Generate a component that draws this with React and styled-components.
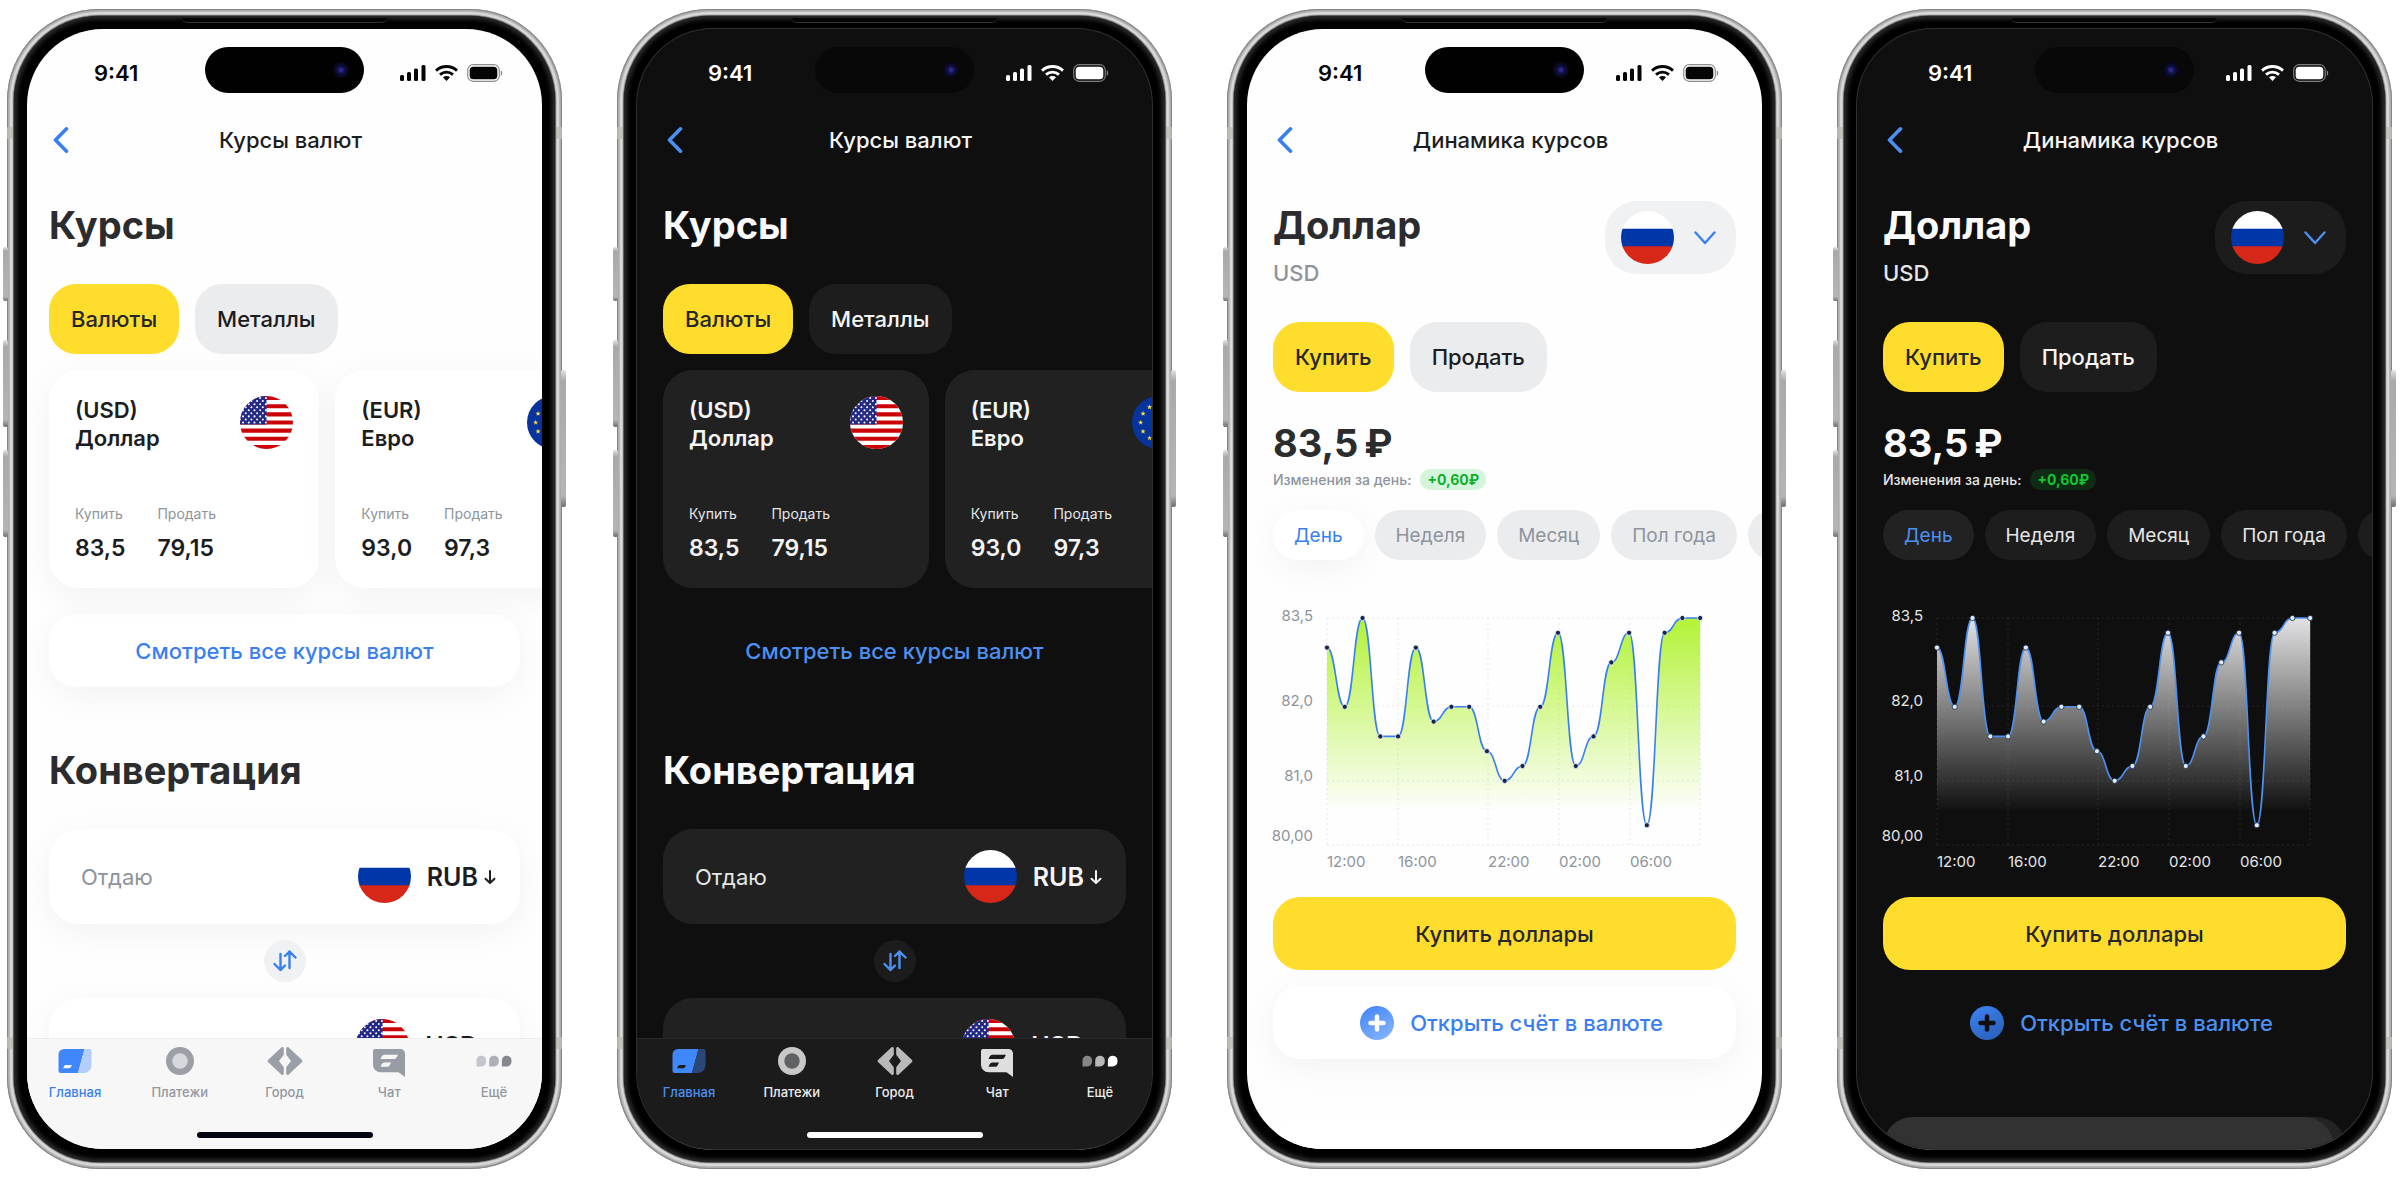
import React, { useId } from 'react';
import styled, { createGlobalStyle, ThemeProvider } from 'styled-components';

const light = {
    dark: false,
    screen: '#fefefe',
    heading: '#2b2c2e',
    text: '#1c1d1f',
    muted: '#8d949c',
    blue: '#3a7ff2',
    pill: '#ebecee',
    soft: '#f0f1f2',
    card: '#ffffff',
    ghost: '#ffffff',
    shadow: '0 8px 36px rgba(0, 0, 0, 0.05)',
    chipActive: '#ffffff',
    sheet: '#ffffff',
    sheetBack: '#ffffff',
    tabs: '#f7f7f8',
    tabsLine: '#ececed',
    tabsText: '#9298a0',
    home: '#02040f',
    edge: 'transparent',
    edgeBottom: 'transparent',
    island: '#010101',
    statusText: '#050505',
    badge: '#d5f4dc',
    badgeText: '#0cb02c',
    grid: '#e6e7e9',
    chart: '#aef22a',
    dot: '#14264f',
    halo: '#ffffff',
    icon: '#9a9ea6',
    iconSoft: '#d5d8dd',
    iconStrong: '#989ca5',
    cut: '#f7f7f8',
    homeSoft: '#b5cdfb',
    plusEnd: '#7fb0ff'
};

const dark = {
    dark: true,
    screen: '#0f0f0f',
    heading: '#fafafa',
    text: '#f5f5f5',
    muted: '#e6e6e6',
    blue: '#4c90f2',
    pill: '#1d1d1d',
    soft: '#1c1c1c',
    card: '#212121',
    ghost: 'transparent',
    shadow: 'none',
    chipActive: '#222222',
    sheet: '#323232',
    sheetBack: '#232323',
    tabs: '#1b1b1b',
    tabsLine: '#2a2a2a',
    tabsText: '#ececec',
    home: '#ffffff',
    edge: '#303030',
    edgeBottom: '#a8a8a8',
    island: '#080808',
    statusText: '#ffffff',
    badge: '#0f2a15',
    badgeText: '#10c92f',
    grid: '#262626',
    chart: '#f0f0f2',
    dot: '#dcebff',
    halo: '#142036',
    icon: '#b9b9b9',
    iconSoft: '#606162',
    iconStrong: '#dedede',
    cut: '#1b1b1b',
    homeSoft: '#2a4778',
    plusEnd: '#2b63bd'
};

const TABS = [
    { id: 'home', label: 'Главная' },
    { id: 'pay', label: 'Платежи' },
    { id: 'city', label: 'Город' },
    { id: 'chat', label: 'Чат' },
    { id: 'more', label: 'Ещё' }
];

const RATES = [
    { code: 'USD', name: 'Доллар', buy: '83,5', sell: '79,15' },
    { code: 'EUR', name: 'Евро', buy: '93,0', sell: '97,3' }
];

const PERIODS = ['День', 'Неделя', 'Месяц', 'Пол года'];

// steps down from the top line of the chart
const POINTS = [2, 6, 0, 8, 8, 2, 7, 6, 6, 9, 11, 10, 6, 1, 10, 8, 3, 1, 14, 1, 0, 0];

const Y_LABELS = [
    { text: '83,5', y: 6 },
    { text: '82,0', y: 91 },
    { text: '81,0', y: 166 },
    { text: '80,00', y: 226 }
];

const X_LABELS = [
    { text: '12:00', x: 54 },
    { text: '16:00', x: 125 },
    { text: '22:00', x: 215 },
    { text: '02:00', x: 286 },
    { text: '06:00', x: 357 }
];

const App = () => {
    return (
        <>
            <GlobalStyle />
            <Stage>
                <Phone theme={light} pad={22}><RatesPage /></Phone>
                <Phone theme={dark} pad={26}><RatesPage /></Phone>
                <Phone theme={light} pad={26}><DynamicsPage /></Phone>
                <Phone theme={dark} pad={26}><DynamicsPage /></Phone>
            </Stage>
        </>
    );
};

const Phone = ({ theme, pad, children }) => (
    <ThemeProvider theme={{ ...theme, pad }}>
        <Frame>
            <SideKey $side="left" $top="20.5%" $height="4.7%" />
            <SideKey $side="left" $top="28.5%" $height="7.5%" />
            <SideKey $side="left" $top="38%" $height="7.5%" />
            <SideKey $side="right" $top="31.1%" $height="11.8%" />
            <Band $top="10.2%" />
            <Band $top="88.6%" />
            <Bezel>
                <Earpiece />
                <Screen>
                    <StatusBar />
                    {children}
                </Screen>
            </Bezel>
        </Frame>
    </ThemeProvider>
);

const StatusBar = () => (
    <Status>
        <Time>9:41</Time>
        <Island><Lens /></Island>
        <StatusIcons>
            <svg width="26" height="16" viewBox="0 0 26 16" fill="currentColor">
                <rect x="0" y="10" width="4" height="6" rx="1.5" />
                <rect x="7" y="7" width="4" height="9" rx="1.5" />
                <rect x="14" y="3.5" width="4" height="12.5" rx="1.5" />
                <rect x="21.5" y="0" width="4" height="16" rx="1.5" />
            </svg>
            <svg width="23" height="16" viewBox="0 0 23 16" fill="none" stroke="currentColor" strokeWidth="2.8">
                <path d="M1 5.6C7 .1 16 .1 22 5.6" />
                <path d="M5 9.600c3.800-3.400 9.200-3.400 13 0" />
                <path d="M11.500 16 8 12.300c2-1.800 5-1.800 7 0z" fill="currentColor" stroke="none" />
            </svg>
            <svg width="36" height="18" viewBox="0 0 36 18">
                <rect x=".7" y=".7" width="31.6" height="16.6" rx="5.5" fill="none" stroke="currentColor" strokeWidth="1.2" opacity=".45" />
                <rect x="2.7" y="2.7" width="27.6" height="12.6" rx="3.6" fill="currentColor" />
                <path d="M33.800 6.200c1.800.8 1.800 4.800 0 5.600z" fill="currentColor" opacity=".5" />
            </svg>
        </StatusIcons>
    </Status>
);

const NavBar = ({ title }) => (
    <Nav>
        <IconButton aria-label="Назад">
            <svg width="16" height="28" viewBox="0 0 16 28" fill="none" stroke="currentColor" strokeWidth="3.6" strokeLinecap="round" strokeLinejoin="round">
                <path d="M13.500 2.800 2.500 14l11 11.200" />
            </svg>
        </IconButton>
        <NavTitle>{title}</NavTitle>
    </Nav>
);

const RatesPage = () => (
    <>
        <NavBar title="Курсы валют" />
        <Content>
            <Heading>Курсы</Heading>
            <Pills>
                <Pill $active>Валюты</Pill>
                <Pill>Металлы</Pill>
            </Pills>
            <Cards>
                {RATES.map((rate) => (
                    <Card key={rate.code}>
                        <CardTop>
                            <CardName>({rate.code})<br />{rate.name}</CardName>
                            <Flag code={rate.code} />
                        </CardTop>
                        <Prices>
                            <div>
                                <dt>Купить</dt>
                                <dd>{rate.buy}</dd>
                            </div>
                            <div>
                                <dt>Продать</dt>
                                <dd>{rate.sell}</dd>
                            </div>
                        </Prices>
                    </Card>
                ))}
            </Cards>
            <WideButton $top={26}>Смотреть все курсы валют</WideButton>
            <Heading $top={59}>Конвертация</Heading>
            <Converter>
                <Exchange label="Отдаю" code="RUB" />
                <Swap aria-label="Поменять местами">
                    <svg width="24" height="24" viewBox="0 0 24 24" fill="none" stroke="currentColor" strokeWidth="2.4" strokeLinecap="round" strokeLinejoin="round">
                        <path d="M7.500 5v16M1.500 15 7.500 21l4.500-4.500M16.500 19V2.500M12 7 16.500 2.500 22.500 8.500" />
                    </svg>
                </Swap>
                <Exchange label="Получаю" code="USD" />
            </Converter>
        </Content>
        <TabBar>
            <TabList>
                {TABS.map((tab) => (
                    <Tab key={tab.id} href="#" $active={tab.id === 'home'}>
                        <TabIcon id={tab.id} />
                        {tab.label}
                    </Tab>
                ))}
            </TabList>
            <HomeBar />
        </TabBar>
    </>
);

const Exchange = ({ label, code }) => (
    <Field>
        <Amount aria-label={label} placeholder={label} />
        <Flag code={code} />
        <CurrencyLabel>
            <Currency aria-label="Валюта" defaultValue={code}>
                <option>{code}</option>
            </Currency>
            <svg width="12" height="16" viewBox="0 0 12 16" fill="none" stroke="currentColor" strokeWidth="2" strokeLinecap="round" strokeLinejoin="round">
                <path d="M6 2v12M1.500 9.800 6 14l4.500-4.200" />
            </svg>
        </CurrencyLabel>
    </Field>
);

const DynamicsPage = () => (
    <>
        <NavBar title="Динамика курсов" />
        <Content>
            <TitleRow>
                <div>
                    <Heading>Доллар</Heading>
                    <Code>USD</Code>
                </div>
                <FlagButton aria-haspopup="listbox" aria-label="Валюта счёта">
                    <Flag code="RUB" />
                    <svg width="22" height="14" viewBox="0 0 22 14" fill="none" stroke="currentColor" strokeWidth="2.4" strokeLinecap="round" strokeLinejoin="round">
                        <path d="M1.500 1.500 11 12l9.500-10.500" />
                    </svg>
                </FlagButton>
            </TitleRow>
            <Pills>
                <Pill $active>Купить</Pill>
                <Pill>Продать</Pill>
            </Pills>
            <Price as="p" $top={27}>
                <span>83,5</span>
                <span>₽</span>
            </Price>
            <Change>
                Изменения за день:
                <Badge>+0,60₽</Badge>
            </Change>
            <Chips>
                {PERIODS.map((period, i) => (
                    <Chip key={period} $active={i === 0}>{period}</Chip>
                ))}
                <Chip aria-label="Год" />
            </Chips>
            <Chart />
            <BuyButton>Купить доллары</BuyButton>
            <WideButton $top={16}>
                <PlusIcon />
                Открыть счёт в валюте
            </WideButton>
            <SheetBack><Sheet /></SheetBack>
        </Content>
    </>
);

const Chart = () => {
    const id = useId();
    const coords = POINTS.map((p, i) => [54 + i * 17.77, 8 + p * 14.8]);
    const line = coords.reduce((path, [x, y], i) => {
        if (i === 0) return `M${x} ${y}`;
        const [px, py] = coords[i - 1];
        const mid = (px + x) / 2;
        return `${path}C${mid} ${py} ${mid} ${y} ${x} ${y}`;
    }, '');

    return (
        <ChartSvg viewBox="0 0 463 260" role="img" aria-label="График курса доллара">
            <defs>
                <linearGradient id={id} gradientUnits="userSpaceOnUse" x1="0" y1="8" x2="0" y2="202">
                    <stop className="fill" offset="0" stopOpacity=".94" />
                    <stop className="fill" offset="1" stopOpacity="0" />
                </linearGradient>
            </defs>
            <g className="grid">
                {[8, 96, 171, 235].map((y) => <path key={y} d={`M54 ${y}H427`} />)}
                {[54, 125, 215, 286, 357, 427].map((x) => <path key={x} d={`M${x} 8V235`} />)}
            </g>
            <path d={`${line}V235H54Z`} fill={`url(#${id})`} />
            <path className="line" d={line} />
            {coords.map(([x, y]) => <circle key={x} cx={x} cy={y} r="2.6" />)}
            {Y_LABELS.map((l) => <text key={l.text} x="40" y={l.y + 5} textAnchor="end">{l.text}</text>)}
            {X_LABELS.map((l) => <text key={l.text} x={l.x} y="257">{l.text}</text>)}
        </ChartSvg>
    );
};

const Flag = ({ code }) => {
    const id = useId();
    return (
        <FlagSvg viewBox="0 0 52 52" aria-hidden="true">
            <clipPath id={id}><circle cx="26" cy="26" r="26" /></clipPath>
            <g clipPath={`url(#${id})`}>
                {code === 'RUB' && (
                    <>
                        <path fill="#fff" d="M0 0h52v18H0z" />
                        <path fill="#0036a7" d="M0 17.300h52v18H0z" />
                        <path fill="#d62718" d="M0 34.700h52V52H0z" />
                    </>
                )}
                {code === 'USD' && (
                    <>
                        <path fill="#fff" d="M0 0h52v52H0z" />
                        {[0, 8, 16, 24, 32, 40, 48].map((y) => <path key={y} fill="#cc0407" d={`M0 ${y}h52v4H0z`} />)}
                        <path fill="#232a86" d="M0 0h26v28H0z" />
                        {[...Array(9)].map((_, row) => [...Array(5)].map((_, col) => (
                            <circle key={`${row}-${col}`} fill="#fff" r="1" cx={(row % 2 ? 0 : 3) + col * 5.6} cy={2 + row * 3} />
                        )))}
                    </>
                )}
                {code === 'EUR' && (
                    <>
                        <path fill="#07339c" d="M0 0h52v52H0z" />
                        {[...Array(12)].map((_, i) => (
                            <g key={i} transform={`translate(${26 + 17.5 * Math.cos(i * Math.PI / 6)} ${26 + 17.5 * Math.sin(i * Math.PI / 6)})`}>
                                <path fill="#ffe14a" d="M0-2.600.6-.8h1.900L1 .4l.6 1.800L0 1.100l-1.600 1.100.6-1.800L-2.500-.8h1.900z" />
                            </g>
                        ))}
                    </>
                )}
            </g>
        </FlagSvg>
    );
};

const TabIcon = ({ id }) => (
    <TabSvg viewBox="0 0 36 32" aria-hidden="true">
        {id === 'home' && (
            <>
                <path className="main" d="M7 4h20.500L21 28H4a2.500 2.500 0 0 1-2.500-2.500V9.500A5.500 5.500 0 0 1 7 4z" />
                <path className="soft" d="M27.500 4h5A2 2 0 0 1 34.500 6v14.500a7.500 7.500 0 0 1-7.500 7.500h-6z" />
                <path className="cut" d="M8.500 20h6.500l-1.200 2.200a2 2 0 0 1-1.800 1H6.300l.7-2a2 2 0 0 1 1.500-1.200z" />
            </>
        )}
        {id === 'pay' && (
            <>
                <circle className="ring" cx="18" cy="16" r="14" />
                <circle className="inner" cx="18" cy="16" r="7.7" />
            </>
        )}
        {id === 'city' && (
            <>
                <path className="gray" d="M16.800 3.500V9.800L12 16l4.800 6.200v6.300c0 1.400-1.500 2-2.500 1L1.200 17.300a1.900 1.900 0 0 1 0-2.600L14.300 2.500c1-1 2.500-.4 2.500 1z" />
                <path className="gray" d="M19.200 3.500V9.800L24 16l-4.800 6.200v6.300c0 1.400 1.500 2 2.500 1l13.100-12.200a1.900 1.900 0 0 0 0-2.600L21.700 2.500c-1-1-2.500-.4-2.500 1z" />
            </>
        )}
        {id === 'chat' && (
            <>
                <path className="strong" d="M4 4h25.500A4.500 4.500 0 0 1 34 8.500V32l-6.500-4.700H9.500A7.500 7.500 0 0 1 2 19.800V6a2 2 0 0 1 2-2z" />
                <path className="cut" d="M13.500 9.800H27l-1.500 2.700a3 3 0 0 1-2.600 1.500H9.500l1.200-2.600a3 3 0 0 1 2.800-1.600zM13.300 17.600H20l-1.300 2.600a3 3 0 0 1-2.600 1.600H9.500l1.200-2.600a3 3 0 0 1 2.600-1.600z" />
            </>
        )}
        {id === 'more' && (
            <>
                <path className="strong" opacity=".55" d="M.5 21.500v-6a4.800 4.800 0 0 1 9.600 0v1.300a4.700 4.700 0 0 1-4.700 4.700z" />
                <path className="strong" opacity=".8" d="M13.200 21.500v-6a4.800 4.800 0 0 1 9.600 0v1.300a4.700 4.700 0 0 1-4.700 4.700z" />
                <path className="last" d="M25.900 21.500v-6a4.800 4.800 0 0 1 9.600 0v1.300a4.700 4.700 0 0 1-4.700 4.700z" />
            </>
        )}
    </TabSvg>
);

const PlusIcon = () => {
    const id = useId();
    return (
        <PlusSvg width="34" height="34" viewBox="0 0 34 34" aria-hidden="true">
            <linearGradient id={id} x1="0" y1="0" x2=".6" y2="1">
                <stop className="start" offset="0" />
                <stop className="end" offset="1" />
            </linearGradient>
            <circle cx="17" cy="17" r="17" fill={`url(#${id})`} />
            <path d="M17 10.500v13M10.500 17h13" />
        </PlusSvg>
    );
};

const GlobalStyle = createGlobalStyle`
    *{
        box-sizing: border-box;
        margin: 0;
        padding: 0;
    }
    body{
        background: #fff;
        font-family: Inter, "Liberation Sans", sans-serif;
        -webkit-font-smoothing: antialiased;
    }
    button, input, select{
        font: inherit;
        color: inherit;
        border: 0;
        background: none;
    }
    svg{
        flex: none;
        display: block;
    }
`;

const Stage = styled.main`
    display: flex;
    gap: 55px;
    padding: 9px 8px 11px 7px;
    overflow: hidden;
`;

const Frame = styled.section`
    position: relative;
    flex: 1;
    min-width: 0;
    aspect-ratio: 555 / 1160;
    padding: 7px;
    border-radius: 92px;
    background: #c2c2c1;
    box-shadow: inset 0 0 0 1px #858584, inset 0 0 2px 3px #a9a9a8, inset 0 0 2px 5px #e9e9e9;
`;

const SideKey = styled.span`
    position: absolute;
    ${({ $side }) => $side}: -4px;
    top: ${({ $top }) => $top};
    height: ${({ $height }) => $height};
    width: 5px;
    border-radius: 2px;
    background: linear-gradient(#e2e2e2, #a9a9a9 8%, #b5b5b5 92%, #6e6e6e);
`;

const Band = styled.span`
    position: absolute;
    left: 0;
    right: 0;
    top: ${({ $top }) => $top};
    height: 12px;
    background: rgba(190, 189, 180, 0.8);
`;

const Bezel = styled.div`
    position: relative;
    height: 100%;
    padding: 13px;
    border-radius: 85px;
    background: #000;
    box-shadow: 0 0 1px 1px #555, inset 0 0 4px 3px #2c2c2c;
`;

const Earpiece = styled.span`
    position: absolute;
    top: 2px;
    left: 31%;
    right: 31%;
    height: 5px;
    border-radius: 0 0 6px 6px;
    background: #050505;
    border-bottom: 1px solid #333;
`;

const Screen = styled.div`
    position: relative;
    display: flex;
    flex-direction: column;
    height: 100%;
    overflow: hidden;
    border-radius: 76px;
    background: ${({ theme }) => theme.screen};
    color: ${({ theme }) => theme.text};
    box-shadow: 0 0 0 1px ${({ theme }) => theme.edge}, 0 1px 0 ${({ theme }) => theme.edgeBottom};
    font-size: 22px;
    font-weight: 500;
`;

const Status = styled.header`
    display: grid;
    grid-template-columns: 1fr 159px 1fr;
    flex: none;
    height: 84px;
    padding-top: 18px;
    line-height: 52px;
    color: ${({ theme }) => theme.statusText};
`;

const Time = styled.span`
    padding-left: ${({ theme }) => theme.pad + 45}px;
    font-weight: 600;
`;

const Island = styled.span`
    display: flex;
    align-items: center;
    justify-content: flex-end;
    height: 46px;
    padding-right: 15px;
    border-radius: 23px;
    background: ${({ theme }) => theme.island};
`;

const Lens = styled.span`
    width: 16px;
    height: 16px;
    border-radius: 50%;
    background: radial-gradient(#2c2a86 0 12%, #11104a 30%, #08081c 60%, #030308);
`;

const StatusIcons = styled.span`
    display: flex;
    align-items: center;
    justify-content: flex-end;
    gap: 9px;
    height: 52px;
    padding-right: ${({ theme }) => theme.pad + 17}px;
`;

const Nav = styled.nav`
    display: grid;
    grid-template-columns: 36px 1fr 24px;
    align-items: center;
    flex: none;
    height: 54px;
    padding: 0 ${({ theme }) => theme.pad}px;
`;

const IconButton = styled.button`
    padding-left: 4px;
    color: ${({ theme }) => theme.blue};
`;

const NavTitle = styled.span`
    text-align: center;
`;

const Content = styled.div`
    flex: 1;
    min-height: 0;
    overflow: hidden;
    padding: 34px ${({ theme }) => theme.pad}px 0;
`;

const Heading = styled.h2`
    margin-top: ${({ $top }) => $top || 0}px;
    font-size: 38px;
    line-height: 48px;
    font-weight: 700;
    color: ${({ theme }) => theme.heading};
`;

const Price = styled(Heading)`
    display: flex;
    gap: 6px;
`;

const Pills = styled.div`
    display: flex;
    gap: 16px;
    margin-top: 35px;
`;

const Pill = styled.button`
    height: 70px;
    padding: 0 22px;
    border-radius: 27px;
    background: ${({ $active, theme }) => ($active ? '#ffdd2d' : theme.pill)};
    color: ${({ $active, theme }) => ($active ? '#26272b' : theme.text)};
`;

const Cards = styled.div`
    display: flex;
    gap: 16px;
    margin-top: 16px;
`;

const Card = styled.article`
    display: flex;
    flex-direction: column;
    justify-content: space-between;
    flex: 0 0 57.4%;
    height: 218px;
    padding: 26px;
    border-radius: 30px;
    background: ${({ theme }) => theme.card};
    box-shadow: ${({ theme }) => theme.shadow};
`;

const CardTop = styled.div`
    display: flex;
    justify-content: space-between;
`;

const CardName = styled.h3`
    font-size: 22px;
    line-height: 28px;
    font-weight: 600;
`;

const Prices = styled.dl`
    display: flex;
    gap: 32px;
    dt{
        font-size: 14px;
        line-height: 20px;
        font-weight: 400;
        color: ${({ theme }) => theme.muted};
    }
    dd{
        margin-top: 10px;
        font-size: 23px;
        line-height: 28px;
        font-weight: 600;
    }
`;

const WideButton = styled.button`
    display: flex;
    align-items: center;
    justify-content: center;
    gap: 16px;
    width: 100%;
    height: 73px;
    margin-top: ${({ $top }) => $top}px;
    border-radius: 27px;
    background: ${({ theme }) => theme.ghost};
    box-shadow: ${({ theme }) => theme.shadow};
    color: ${({ theme }) => theme.blue};
`;

const BuyButton = styled(WideButton)`
    margin-top: 27px;
    background: #ffdd2d;
    box-shadow: none;
    color: #26272b;
`;

const Converter = styled.form`
    display: flex;
    flex-direction: column;
    align-items: center;
    gap: 16px;
    margin-top: 35px;
`;

const Field = styled.div`
    display: flex;
    align-items: center;
    width: 100%;
    height: 95px;
    padding: 0 24px 0 32px;
    border-radius: 30px;
    background: ${({ theme }) => theme.card};
    box-shadow: ${({ theme }) => theme.shadow};
`;

const Amount = styled.input`
    flex: 1;
    min-width: 0;
    font-weight: 400;
    outline: 0;
    &::placeholder{
        color: ${({ theme }) => theme.muted};
        opacity: 1;
    }
`;

const CurrencyLabel = styled.label`
    display: flex;
    align-items: center;
    gap: 6px;
    margin-left: 16px;
`;

const Currency = styled.select`
    appearance: none;
    field-sizing: content;
    font-size: 25px;
    font-weight: 600;
    outline: 0;
`;

const Swap = styled.button`
    display: grid;
    place-items: center;
    width: 42px;
    height: 42px;
    border-radius: 50%;
    background: ${({ theme }) => theme.soft};
    color: ${({ theme }) => theme.blue};
`;

const TabBar = styled.footer`
    position: relative;
    display: flex;
    flex-direction: column;
    justify-content: space-between;
    flex: none;
    height: 111px;
    padding: 6px ${({ theme }) => theme.pad - 4}px 11px;
    border-top: 1px solid ${({ theme }) => theme.tabsLine};
    background: ${({ theme }) => theme.tabs};
`;

const TabList = styled.nav`
    display: flex;
    justify-content: space-between;
`;

const Tab = styled.a`
    display: flex;
    flex-direction: column;
    align-items: center;
    gap: 6px;
    width: 60px;
    font-size: 13px;
    line-height: 18px;
    text-decoration: none;
    color: ${({ $active, theme }) => ($active ? theme.blue : theme.tabsText)};
`;

const TabSvg = styled.svg`
    width: 36px;
    height: 32px;
    .main{ fill: #3f87fb; }
    .soft{ fill: ${({ theme }) => theme.homeSoft}; }
    .cut{ fill: ${({ theme }) => theme.cut}; }
    .ring{ fill: ${({ theme }) => (theme.dark ? '#c8c8c8' : '#9ca0a6')}; }
    .inner{ fill: ${({ theme }) => theme.iconSoft}; }
    .gray{ fill: ${({ theme }) => theme.icon}; }
    .strong{ fill: ${({ theme }) => theme.iconStrong}; }
    .last{ fill: ${({ theme }) => (theme.dark ? '#ffffff' : '#85888f')}; }
`;

const HomeBar = styled.span`
    align-self: center;
    width: 176px;
    height: 6px;
    border-radius: 3px;
    background: ${({ theme }) => theme.home};
`;

const TitleRow = styled.div`
    display: flex;
    justify-content: space-between;
    align-items: flex-start;
    height: 86px;
`;

const Code = styled.p`
    margin-top: 10px;
    line-height: 28px;
    color: ${({ theme }) => theme.muted};
`;

const FlagButton = styled.button`
    display: flex;
    align-items: center;
    gap: 20px;
    height: 73px;
    padding: 0 20px 0 16px;
    border-radius: 32px;
    background: ${({ theme }) => theme.soft};
    color: ${({ theme }) => theme.blue};
`;

const FlagSvg = styled.svg`
    width: 53px;
    height: 53px;
`;

const Change = styled.p`
    display: flex;
    align-items: center;
    gap: 9px;
    height: 24px;
    font-size: 14px;
    color: ${({ theme }) => theme.muted};
`;

const Badge = styled.span`
    padding: 0 7px;
    border-radius: 10px;
    line-height: 21px;
    font-weight: 700;
    background: ${({ theme }) => theme.badge};
    color: ${({ theme }) => theme.badgeText};
`;

const Chips = styled.div`
    display: flex;
    gap: 11px;
    margin-top: 19px;
`;

const Chip = styled.button`
    flex: none;
    min-width: 80px;
    height: 50px;
    padding: 0 21px;
    border-radius: 25px;
    font-size: 19px;
    font-weight: 400;
    background: ${({ $active, theme }) => ($active ? theme.chipActive : theme.pill)};
    box-shadow: ${({ $active, theme }) => ($active ? theme.shadow : 'none')};
    color: ${({ $active, theme }) => ($active ? theme.blue : theme.muted)};
`;

const ChartSvg = styled.svg`
    width: 100%;
    margin-top: 50px;
    overflow: visible;
    font-size: 15px;
    font-weight: 400;
    .fill{ stop-color: ${({ theme }) => theme.chart}; }
    .grid{
        stroke: ${({ theme }) => theme.grid};
        stroke-dasharray: 2 3;
    }
    .line{
        fill: none;
        stroke: ${({ theme }) => theme.blue};
        stroke-width: 1.6;
    }
    circle{
        fill: ${({ theme }) => theme.dot};
        stroke: ${({ theme }) => theme.halo};
        stroke-width: 0.8;
    }
    text{ fill: ${({ theme }) => theme.muted}; }
`;

const PlusSvg = styled.svg`
    margin-left: 14px;
    .start{ stop-color: #3f83f5; }
    .end{ stop-color: ${({ theme }) => theme.plusEnd}; }
    path{
        stroke: ${({ theme }) => theme.screen};
        stroke-width: 4.5;
        stroke-linecap: round;
    }
`;

const SheetBack = styled.div`
    height: 90px;
    margin-top: 58px;
    padding-right: 12px;
    border-radius: 30px;
    background: ${({ theme }) => theme.sheetBack};
`;

const Sheet = styled.div`
    height: 100%;
    border-radius: 30px;
    background: ${({ theme }) => theme.sheet};
`;

export default App;
